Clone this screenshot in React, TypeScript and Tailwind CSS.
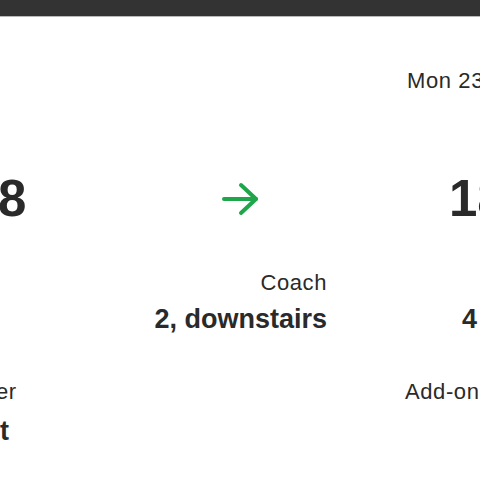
export default function App() {
  return (
    <div className="w-[480px] h-[480px] overflow-hidden bg-white text-[#2a2a2a] font-['Liberation_Sans',Arial,sans-serif]">
      <div className="h-[17px] bg-[#333333] border-b border-[#b9b9b9]" />

      {/* date */}
      <div className="grid grid-cols-[153px_174px_1fr] mt-[52px]">
        <div />
        <div />
        <div className="pl-[80px] whitespace-nowrap text-[22px] leading-[24px] tracking-[0.6px]">Mon 23</div>
      </div>

      {/* times */}
      <div className="grid grid-cols-[153px_174px_1fr] items-center mt-[80px]">
        <div className="-ml-[2px] text-[51px] leading-[51px] font-bold">8</div>
        <div className="flex justify-center">
          <svg width="40" height="36" viewBox="0 0 40 36" fill="none" stroke="#1fa64a" strokeWidth="4" strokeLinecap="round" strokeLinejoin="round">
            <path d="M4 18H36" />
            <path d="M21 4L36 18L21 32" />
          </svg>
        </div>
        <div className="pl-[122px] whitespace-nowrap text-[51px] leading-[51px] font-bold">18</div>
      </div>

      {/* coach */}
      <div className="grid grid-cols-[153px_174px_1fr] mt-[47px]">
        <div />
        <div className="text-right text-[22px] leading-[24px] tracking-[0.6px]">Coach</div>
        <div />
      </div>
      <div className="grid grid-cols-[153px_174px_1fr] mt-[8px]">
        <div />
        <div className="text-right whitespace-nowrap text-[27px] leading-[32px] font-bold">2, downstairs</div>
        <div className="pl-[135px] whitespace-nowrap text-[27px] leading-[32px] font-bold">4</div>
      </div>

      {/* extras */}
      <div className="grid grid-cols-[153px_174px_1fr] mt-[45px]">
        <div className="-ml-[4px] text-[22px] leading-[24px] tracking-[0.6px]">er</div>
        <div />
        <div className="pl-[78px] whitespace-nowrap text-[22px] leading-[24px] tracking-[0.6px]">Add-on</div>
      </div>
      <div className="grid grid-cols-[153px_174px_1fr] mt-[11px]">
        <div className="text-[27px] leading-[32px] font-bold">t</div>
        <div />
        <div />
      </div>
    </div>
  );
}
